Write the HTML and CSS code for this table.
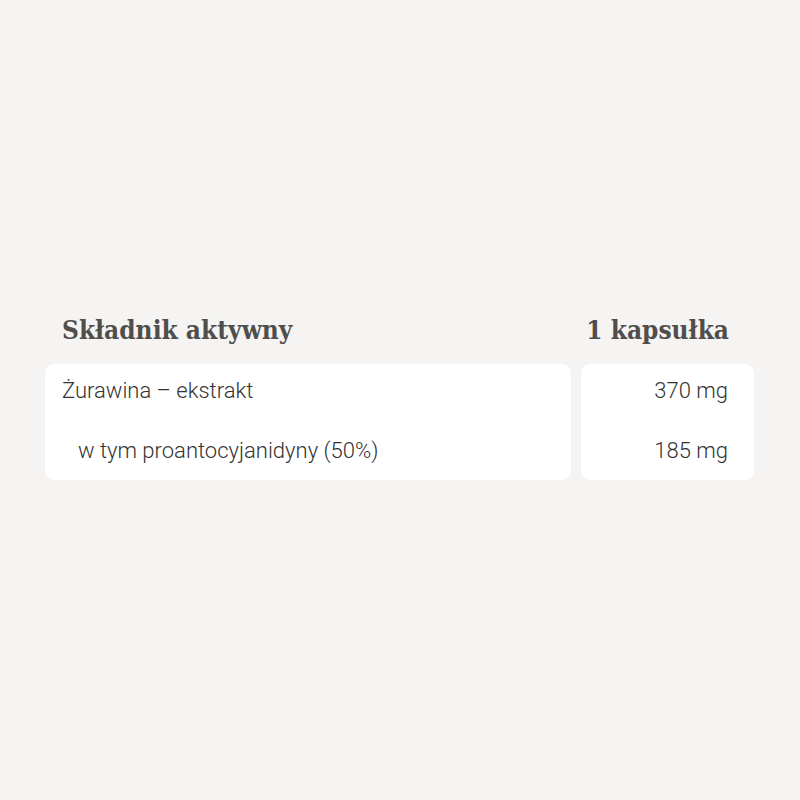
FILE: index.html
```html
<!DOCTYPE html>
<html lang="pl">
<head>
<meta charset="utf-8">
<link rel="stylesheet" href="styles.css">
</head>
<body>
<div class="table">
  <div class="th th-name">Składnik aktywny</div>
  <div class="th th-val">1 kapsułka</div>
  <div class="card card-name">
    <div class="cell">Żurawina – ekstrakt</div>
    <div class="cell sub">w tym proantocyjanidyny (50%)</div>
  </div>
  <div class="card card-val">
    <div class="cell">370 mg</div>
    <div class="cell">185 mg</div>
  </div>
</div>
</body>
</html>
```
FILE: styles.css
```css
html, body {
  margin: 0;
  padding: 0;
  background: #f5f4f2;
}
body {
  width: 800px;
  height: 800px;
  padding: 314px 0 0 45px;
  box-sizing: border-box;
}
.table {
  display: grid;
  grid-template-columns: 526px 173px;
  column-gap: 10px;
  row-gap: 18px;
  width: 709px;
}
.th {
  font-family: "DejaVu Serif Condensed", "DejaVu Serif", serif;
  font-stretch: condensed;
  font-weight: bold;
  font-size: 26px;
  line-height: 32px;
  color: #4f4e4d;
}
.th-name { padding-left: 17px; }
.th-val { text-align: right; padding-right: 25px; }
.card {
  background: #ffffff;
  border-radius: 9px;
  padding: 12px 0 14px;
  display: flex;
  flex-direction: column;
  gap: 30px;
  font-family: Roboto, sans-serif;
  font-weight: 300;
  font-size: 22px;
  color: #333333;
}
.cell { line-height: 30px; }
.card-name .cell { padding-left: 17px; }
.card-name .sub { padding-left: 33px; }
.card-val .cell { text-align: right; padding-right: 26px; }
```
